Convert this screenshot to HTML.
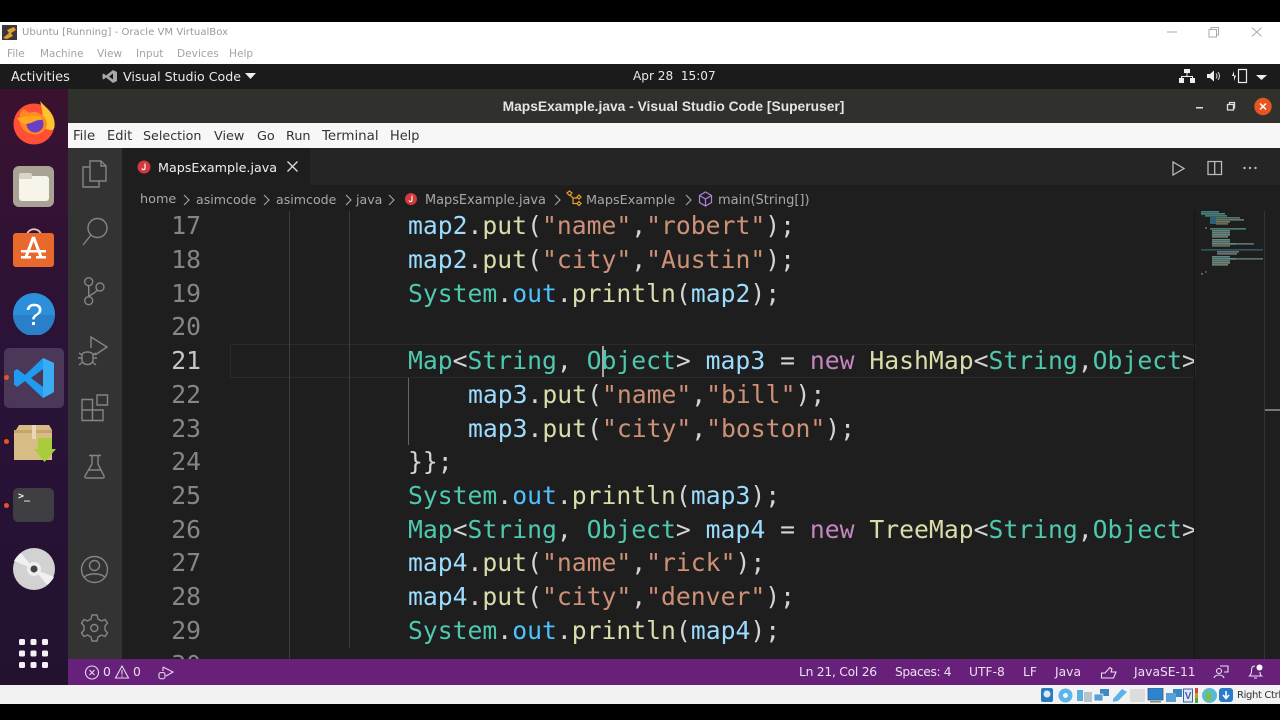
<!DOCTYPE html>
<html><head><meta charset="utf-8">
<style>
html,body{margin:0;padding:0;background:#000;}
body{width:1280px;height:720px;overflow:hidden;position:relative;font-family:"Liberation Sans",sans-serif;}
#root{position:absolute;left:0;top:0;width:1280px;height:720px;overflow:hidden;filter:blur(.3px);}
#root div,#root svg{position:absolute;}
.t{white-space:pre;font-family:"DejaVu Sans","Liberation Sans",sans-serif;}
#root .l{position:absolute;left:0;white-space:pre;font-family:"DejaVu Sans Mono","Liberation Mono",monospace;font-size:24.72px;line-height:34px;height:34px;color:#d4d4d4;}
#root .n{left:130px;width:71px;text-align:right;color:#858585;}
.v{color:#9cdcfe}.f{color:#dcdcaa}.s{color:#ce9178}.c{color:#4ec9b0}.k{color:#c586c0}.o{color:#4fc1ff}
svg .st{fill:none;stroke:#858585;stroke-width:1.4}
#mm rect{height:1.7px}
</style></head><body><div id="root">
<!-- VirtualBox window -->
<div style="left:0;top:22px;width:1280px;height:42px;background:#fff"></div>
<svg style="left:2px;top:25px" width="15" height="15" viewBox="0 0 15 15"><rect width="15" height="15" fill="#3a3a3a"/><path d="M1 13L7 8L5 5L12 2L14 5L9 8L11 11L5 14Z" fill="#e0a030"/></svg>
<div class="t" style="left:22px;top:26px;font-size:10.1px;line-height:14px;color:#9a9a9a">Ubuntu [Running] - Oracle VM VirtualBox</div>
<div class="t" style="left:7px;top:47px;font-size:10.6px;line-height:14px;color:#a3a3a3">File</div>
<div class="t" style="left:40px;top:47px;font-size:10.4px;line-height:14px;color:#a3a3a3">Machine</div>
<div class="t" style="left:97px;top:47px;font-size:10.6px;line-height:14px;color:#a3a3a3">View</div>
<div class="t" style="left:136px;top:47px;font-size:10.6px;line-height:14px;color:#a3a3a3">Input</div>
<div class="t" style="left:177px;top:47px;font-size:10.6px;line-height:14px;color:#a3a3a3">Devices</div>
<div class="t" style="left:229px;top:47px;font-size:10.6px;line-height:14px;color:#a3a3a3">Help</div>
<svg style="left:1160px;top:24px" width="110" height="16" viewBox="0 0 110 16" fill="none" stroke="#aaa" stroke-width="1"><path d="M7 8H17"/><path d="M49 5.500H56.500V13H49ZM51 5.500V3.500H58.500V11H56.500"/><path d="M92 3.500L101.500 12.500M101.500 3.500L92 12.500"/></svg>
<!-- GNOME top bar -->
<div style="left:0;top:64px;width:1280px;height:25px;background:#1b1b1b"></div>
<div class="t" style="left:11px;top:69px;font-size:12.9px;line-height:17px;color:#eaeaea">Activities</div>
<svg style="left:102px;top:69px" width="16" height="15" viewBox="0 0 16 15"><path d="M11 1L15 3V12L11 14L4 8.500L1.500 10.500L0.500 9.500V5.500L1.500 4.500L4 6.500ZM11 4.500L7 7.500L11 10.500Z" fill="#a8a8a8" fill-rule="evenodd"/></svg>
<div class="t" style="left:123px;top:68px;font-size:12.6px;line-height:17px;color:#eaeaea">Visual Studio Code</div>
<svg style="left:245px;top:73px" width="11" height="7"><path d="M0 0H11L5.500 6Z" fill="#eee"/></svg>
<div class="t" style="left:633px;top:68px;font-size:12.1px;line-height:17px;color:#e8e8e8">Apr 28  15:07</div>
<svg style="left:1178px;top:68px" width="92" height="16" viewBox="0 0 92 16"><g fill="#eee"><rect x="6" y="1" width="6" height="4"/><rect x="1" y="10" width="5" height="5"/><rect x="12" y="10" width="5" height="5"/><path d="M8.500 5h1v3H15v2h-1V9H4v1H3V8h5.500Z"/><path d="M29 6h3l4-3.500v11L32 10h-3Z"/></g><path d="M38 5.500Q40 8 38 10.500M40 4Q43 8 40 12" fill="none" stroke="#ddd"/><rect x="60.500" y="1.500" width="8" height="13" fill="none" stroke="#eee" stroke-width="1.200"/><path d="M56 3L54 8H56V13L58 7.500H56Z" fill="#eee"/><path d="M78 7H89L83.500 12Z" fill="#eee"/></svg>
<!-- Dock -->
<div style="left:0;top:89px;width:68px;height:596px;background:linear-gradient(#3a1230,#2a1238 45%,#221230)"></div>
<!-- firefox -->
<svg style="left:12px;top:100px" width="44" height="45" viewBox="0 0 44 45"><circle cx="22" cy="24" r="20.500" fill="#ff5036"/><path d="M28 1C34 8 44 14 42.500 27C41 32 36 30 30 27C32 18 30 8 28 1Z" fill="#ffc52e"/><path d="M9 12C12 7 14 10 17 13C24 10 33 14 35 23C35 31 27 36 20 34C11 32 8 26 8 20C7 17 8 14 9 12Z" fill="#ff8a1f"/><circle cx="23" cy="24" r="8.500" fill="#6a3fc4"/><path d="M5 18C10 18 18 14 27 16C29 17 31 19 30 20C24 19 20 24 13 24C10 24 7 21 5 18Z" fill="#ffa51f"/></svg>
<!-- files -->
<div style="left:13px;top:166px;width:41px;height:41px;border-radius:6px;background:#a8a394"></div>
<div style="left:19px;top:176px;width:30px;height:25px;border-radius:3px;background:#f7f4ea"></div>
<div style="left:19px;top:173px;width:13px;height:6px;border-radius:2px 2px 0 0;background:#d8d4c8"></div>
<!-- software -->
<svg style="left:13px;top:228px" width="42" height="40" viewBox="0 0 42 40"><path d="M14 8C14 -1 28 -1 28 8" fill="none" stroke="#e6c8b8" stroke-width="1.800"/><rect y="5" width="41" height="34" rx="3" fill="#e9692c"/><path d="M20.500 9L13 29M20.500 9L28 29" stroke="#fff" stroke-width="3" fill="none"/><rect x="8" y="22" width="25" height="2.500" fill="#fff"/><rect x="8" y="28" width="10" height="2.500" fill="#fff"/><rect x="23" y="28" width="10" height="2.500" fill="#fff"/></svg>
<!-- help -->
<svg style="left:13px;top:293px" width="42" height="42" viewBox="0 0 42 42"><circle cx="21" cy="21" r="21" fill="#2c8fdc"/><path d="M0 22A21 21 0 0 0 42 22Z" fill="#2a80c8"/><text x="21" y="32" font-family="Liberation Sans,sans-serif" font-size="31" fill="#fff" text-anchor="middle">?</text></svg>
<!-- vscode -->
<div style="left:4px;top:348px;width:60px;height:60px;border-radius:5px;background:#4b3858"></div>
<div style="left:4px;top:375px;width:5px;height:5px;border-radius:50%;background:#e95420"></div>
<svg style="left:13px;top:357px" width="42" height="42" viewBox="0 0 42 42"><path d="M30 1L41 6V35L30 41L12 24L4 30L1 27.500V14L4 12L12 18ZM30 12L18 21L30 30Z" fill="#1f9cf0" fill-rule="evenodd"/><path d="M30 1L41 6V35L30 41Z" fill="#39adf2"/></svg>
<!-- package -->
<div style="left:4px;top:439px;width:5px;height:5px;border-radius:50%;background:#e95420"></div>
<svg style="left:13px;top:424px" width="44" height="42" viewBox="0 0 44 42"><path d="M3 6L6 1H36L39 6V36H1V6Z" fill="#d8bc86"/><path d="M1 6H39V9H1Z" fill="#c4a46c"/><rect x="19" y="1" width="4" height="14" fill="#e8d8b8"/><path d="M25 14H39V25H43L31.500 38L21 25H25Z" fill="#a8cc3c"/></svg>
<!-- terminal -->
<div style="left:4px;top:503px;width:5px;height:5px;border-radius:50%;background:#e95420"></div>
<div style="left:13px;top:488px;width:41px;height:34px;border-radius:5px;background:#3f3f43"></div>
<div class="t" style="left:18px;top:491px;font-size:10px;line-height:12px;color:#eee;font-family:'DejaVu Sans Mono',monospace;font-weight:bold">&gt;_</div>
<!-- disc -->
<svg style="left:13px;top:548px" width="42" height="42" viewBox="0 0 42 42"><circle cx="21" cy="21" r="21" fill="#d2d2d2"/><path d="M21 21L1 13A21 21 0 0 1 8 5ZM21 21L41 29A21 21 0 0 1 34 37Z" fill="#f0f0f0"/><circle cx="21" cy="21" r="7" fill="#eee"/><circle cx="21" cy="21" r="3.500" fill="#444"/></svg>
<!-- apps grid -->
<svg style="left:19px;top:639px" width="30" height="30" fill="#f4f0f4"><rect x="0" y="0" width="6" height="6" rx="1.500"/><rect x="11.500" y="0" width="6" height="6" rx="1.500"/><rect x="23" y="0" width="6" height="6" rx="1.500"/><rect x="0" y="11.500" width="6" height="6" rx="1.500"/><rect x="11.500" y="11.500" width="6" height="6" rx="1.500"/><rect x="23" y="11.500" width="6" height="6" rx="1.500"/><rect x="0" y="23" width="6" height="6" rx="1.500"/><rect x="11.500" y="23" width="6" height="6" rx="1.500"/><rect x="23" y="23" width="6" height="6" rx="1.500"/></svg>
<!-- VS Code title -->
<div style="left:68px;top:89px;width:1212px;height:34px;background:#30302d"></div>
<div class="t" style="left:68px;top:98px;width:1211px;text-align:center;font-size:13.8px;line-height:17px;font-weight:bold;color:#e4e4e4;font-family:'Liberation Sans',sans-serif;">MapsExample.java - Visual Studio Code [Superuser]</div>
<svg style="left:1190px;top:97px" width="84" height="20" viewBox="0 0 84 20"><rect x="6" y="10" width="7" height="1.500" fill="#ddd"/><path d="M37.500 7.500H43.500V13H37.500ZM39.500 7.500V5.500H44.500V11H43.500" fill="none" stroke="#ddd" stroke-width="1.300"/><circle cx="73" cy="9.500" r="8.700" fill="#e95420"/><path d="M70 6.500L76 12.500M76 6.500L70 12.500" stroke="#fff" stroke-width="1.500"/></svg>
<!-- menu bar -->
<div style="left:68px;top:123px;width:1212px;height:25px;background:#f7f7f7"></div>
<div class="t" style="left:73px;top:128px;font-size:13.2px;line-height:17px;color:#333">File</div>
<div class="t" style="left:107px;top:128px;font-size:13px;line-height:17px;color:#333">Edit</div>
<div class="t" style="left:143px;top:127px;font-size:12.7px;line-height:17px;color:#333">Selection</div>
<div class="t" style="left:214px;top:128px;font-size:12.8px;line-height:17px;color:#333">View</div>
<div class="t" style="left:257px;top:128px;font-size:12.8px;line-height:17px;color:#333">Go</div>
<div class="t" style="left:286px;top:128px;font-size:12.8px;line-height:17px;color:#333">Run</div>
<div class="t" style="left:322px;top:128px;font-size:13.4px;line-height:17px;color:#333">Terminal</div>
<div class="t" style="left:390px;top:128px;font-size:12.9px;line-height:17px;color:#333">Help</div>
<!-- activity bar -->
<div style="left:68px;top:148px;width:54px;height:511px;background:#333"></div>
<svg style="left:68px;top:148px" width="54" height="511" viewBox="0 0 54 511">
<path class="st" d="M22 13H33L38 18V33H22ZM33 13V18H38M22 19H15V39H31V33"/>
<circle class="st" cx="29.500" cy="80" r="9.500"/><path class="st" d="M23 87L15 97"/>
<circle class="st" cx="20.700" cy="133.700" r="4"/><circle class="st" cx="20.700" cy="152.700" r="4"/><circle class="st" cx="32" cy="139" r="4"/><path class="st" d="M20.700 137.700V148.700M29 142C27 146 22 146 21 149"/>
<path class="st" d="M23 200V189L39 199L27 207M14 207C14 203 25 203 25 207V212C25 218 14 218 14 212ZM11 205L14 207M10 210H14M11 217L14 214.500M28 205L25 207M29 210H25M28 217L25 214.500"/>
<path class="st" d="M14 251.500H24.500V262H14ZM14 262H24.500V272.500H14ZM24.500 262H35V272.500H24.500ZM29 247H39.500V257H29Z"/>
<path class="st" d="M21 307.500H33M24 307.500V316L17 328C16.500 329.500 17 330 18.500 330H34.500C36 330 36.500 329.500 36 328L30 316V307.500M20.500 322H33"/>
<circle class="st" cx="26.500" cy="421.500" r="13"/><circle class="st" cx="26.500" cy="417.500" r="5"/><path class="st" d="M16 430C18 424.500 35 424.500 37 430"/>
<circle class="st" cx="26.300" cy="480" r="3.500"/><path class="st" d="M24 467L23 471L19.500 473L16 471.500L13.500 475L16 478L16 482L13.500 485L16 488.500L19.500 487L23 489L24 493H29L30 489L33.500 487L37 488.500L39.500 485L37 482V478L39.500 475L37 471.500L33.500 473L30 471L29 467Z"/>
</svg>
<!-- tab area -->
<div style="left:122px;top:148px;width:1158px;height:63px;background:#252526"></div>
<div style="left:122px;top:148px;width:188px;height:37px;background:#1e1e1e"></div>
<div style="left:310px;top:148px;width:970px;height:37px;background:#252526"></div>
<div style="left:122px;top:185px;width:1158px;height:26px;background:#1e1e1e"></div>
<svg style="left:137px;top:160px" width="14" height="14"><circle cx="7" cy="7" r="6.500" fill="#d33a3e"/><path d="M8 3.500V8C8 10 5.500 10 5 8.500" fill="none" stroke="#fff" stroke-width="1.200"/></svg>
<div class="t" style="left:158px;top:159px;font-size:12.7px;line-height:17px;color:#f0f0f0">MapsExample.java</div>
<svg style="left:286px;top:160px" width="13" height="13"><path d="M1.500 1.500L11.500 11.500M11.500 1.500L1.500 11.500" stroke="#ddd" stroke-width="1.300"/></svg>
<svg style="left:1168px;top:158px" width="95" height="20" viewBox="0 0 95 20" fill="none" stroke="#bbb" stroke-width="1.300"><path d="M5 4V17L16 10.500Z"/><path d="M40 3.500H53.500V16.500H40ZM46.700 3.500V16.500"/><g fill="#bbb" stroke="none"><circle cx="76.500" cy="10" r="1.200"/><circle cx="82" cy="10" r="1.200"/><circle cx="87.500" cy="10" r="1.200"/></g></svg>
<!-- breadcrumbs -->
<div class="t" style="left:140px;top:191px;font-size:12.8px;line-height:17px;color:#a8a8a8">home</div>
<div class="t" style="left:196px;top:191px;font-size:12.6px;line-height:17px;color:#a8a8a8">asimcode</div>
<div class="t" style="left:276px;top:191px;font-size:12.6px;line-height:17px;color:#a8a8a8">asimcode</div>
<div class="t" style="left:356px;top:191px;font-size:12.6px;line-height:17px;color:#a8a8a8">java</div>
<svg style="left:182px;top:192px" width="10" height="16"><path d="M2 3L7 8L2 13" fill="none" stroke="#a8a8a8" stroke-width="1.100"/></svg>
<svg style="left:262px;top:192px" width="10" height="16"><path d="M2 3L7 8L2 13" fill="none" stroke="#a8a8a8" stroke-width="1.100"/></svg>
<svg style="left:344px;top:192px" width="10" height="16"><path d="M2 3L7 8L2 13" fill="none" stroke="#a8a8a8" stroke-width="1.100"/></svg>
<svg style="left:387px;top:192px" width="10" height="16"><path d="M2 3L7 8L2 13" fill="none" stroke="#a8a8a8" stroke-width="1.100"/></svg>
<svg style="left:553px;top:192px" width="10" height="16"><path d="M2 3L7 8L2 13" fill="none" stroke="#a8a8a8" stroke-width="1.100"/></svg>
<svg style="left:684px;top:192px" width="10" height="16"><path d="M2 3L7 8L2 13" fill="none" stroke="#a8a8a8" stroke-width="1.100"/></svg>
<svg style="left:404px;top:192px" width="14" height="14"><circle cx="7" cy="7" r="6" fill="#d33a3e"/><path d="M8 3.500V8C8 10 5.500 10 5 8.500" fill="none" stroke="#fff" stroke-width="1.100"/></svg>
<div class="t" style="left:425px;top:192px;font-size:12.9px;line-height:17px;color:#a8a8a8">MapsExample.java</div>
<svg style="left:565px;top:190px" width="18" height="17" viewBox="0 0 18 17" fill="none" stroke="#ee9d28" stroke-width="1.200"><path d="M2 3L4.500 1L7 3L4.500 5.500ZM12 7L14 5L16 7L14 9ZM12 13.500L14 11.500L16 13.500L14 15.500ZM5 5L8 8H12M8 8V13.500H12"/></svg>
<div class="t" style="left:586px;top:192px;font-size:12.8px;line-height:17px;color:#a8a8a8">MapsExample</div>
<svg style="left:698px;top:191px" width="15" height="16" viewBox="0 0 15 16" fill="none" stroke="#b180d7" stroke-width="1.200"><path d="M7.500 1L13.500 4.500V11.500L7.500 15L1.500 11.500V4.500ZM1.500 4.500L7.500 8L13.500 4.500M7.500 8V15"/></svg>
<div class="t" style="left:718px;top:192px;font-size:13px;line-height:17px;color:#a8a8a8">main(String[])</div>
<!-- editor -->
<div style="left:122px;top:211px;width:1158px;height:448px;background:#1e1e1e;overflow:hidden">
<div style="left:108px;top:133px;width:964px;height:32px;border:1px solid #2a2a2a"></div>
<div style="left:167px;top:0;width:1px;height:448px;background:#3c3c3c"></div>
<div style="left:227px;top:0;width:1px;height:437px;background:#3c3c3c"></div>
<div style="left:286px;top:167px;width:1px;height:67px;background:#666"></div>
<div style="left:480px;top:135px;width:2px;height:31px;background:#a6a6a6"></div>
</div>
<div style="left:0;top:211px;width:1195px;height:448px;overflow:hidden">
<div class="l n" style="top:-2px">17</div>
<div class="l n" style="top:32px">18</div>
<div class="l n" style="top:66px">19</div>
<div class="l n" style="top:99px">20</div>
<div class="l n" style="top:133px;color:#c6c6c6">21</div>
<div class="l n" style="top:167px">22</div>
<div class="l n" style="top:201px">23</div>
<div class="l n" style="top:234px">24</div>
<div class="l n" style="top:268px">25</div>
<div class="l n" style="top:302px">26</div>
<div class="l n" style="top:335px">27</div>
<div class="l n" style="top:369px">28</div>
<div class="l n" style="top:403px">29</div>
<div class="l n" style="top:437px">30</div>
<div class="l" style="top:-2px;left:408px"><span class="v">map2</span>.<span class="f">put</span>(<span class="s">"name"</span>,<span class="s">"robert"</span>);</div>
<div class="l" style="top:32px;left:408px"><span class="v">map2</span>.<span class="f">put</span>(<span class="s">"city"</span>,<span class="s">"Austin"</span>);</div>
<div class="l" style="top:66px;left:408px"><span class="c">System</span>.<span class="o">out</span>.<span class="f">println</span>(<span class="v">map2</span>);</div>
<div class="l" style="top:133px;left:408px"><span class="c">Map</span>&lt;<span class="c">String</span>, <span class="c">Object</span>&gt; <span class="v">map3</span> = <span class="k">new</span> <span class="f">HashMap</span>&lt;<span class="c">String</span>,<span class="c">Object</span>&gt;</div>
<div class="l" style="top:167px;left:468px"><span class="v">map3</span>.<span class="f">put</span>(<span class="s">"name"</span>,<span class="s">"bill"</span>);</div>
<div class="l" style="top:201px;left:468px"><span class="v">map3</span>.<span class="f">put</span>(<span class="s">"city"</span>,<span class="s">"boston"</span>);</div>
<div class="l" style="top:234px;left:408px">}};</div>
<div class="l" style="top:268px;left:408px"><span class="c">System</span>.<span class="o">out</span>.<span class="f">println</span>(<span class="v">map3</span>);</div>
<div class="l" style="top:302px;left:408px"><span class="c">Map</span>&lt;<span class="c">String</span>, <span class="c">Object</span>&gt; <span class="v">map4</span> = <span class="k">new</span> <span class="f">TreeMap</span>&lt;<span class="c">String</span>,<span class="c">Object</span>&gt;</div>
<div class="l" style="top:335px;left:408px"><span class="v">map4</span>.<span class="f">put</span>(<span class="s">"name"</span>,<span class="s">"rick"</span>);</div>
<div class="l" style="top:369px;left:408px"><span class="v">map4</span>.<span class="f">put</span>(<span class="s">"city"</span>,<span class="s">"denver"</span>);</div>
<div class="l" style="top:403px;left:408px"><span class="c">System</span>.<span class="o">out</span>.<span class="f">println</span>(<span class="v">map4</span>);</div>
</div>
<!-- minimap -->
<div style="left:1194px;top:211px;width:1px;height:448px;background:#141414"></div>
<div style="left:1264px;top:211px;width:1px;height:448px;background:#333"></div>
<div style="left:1265px;top:409px;width:15px;height:2px;background:#777"></div>
<svg id="mm" style="left:1190px;top:205px" width="76" height="75" viewBox="0 0 76 75">
<g>
<rect x="11" y="6" width="18" height="1" fill="#3f7f85"/><rect x="11" y="8" width="24" height="1" fill="#4a8478"/><rect x="15" y="10" width="22" height="1" fill="#3f7f7a"/>
<rect x="20" y="12" width="6" style="height:7px" fill="#2f5f78"/><rect x="26" y="12" width="24" height="1" fill="#5f7068"/><rect x="26" y="14" width="28" height="1" fill="#5c7a6e"/><rect x="26" y="16" width="14" height="1" fill="#7a7a5a"/><rect x="26" y="18" width="12" height="1" fill="#6a6a58"/>
<rect x="15" y="22" width="2" height="2" fill="#5a6a6a"/>
<rect x="20" y="23" width="36" height="1" fill="#4a7a72"/>
<rect x="22" y="25" width="18" height="1" fill="#5c8888"/><rect x="22" y="27" width="18" height="1" fill="#708070"/><rect x="22" y="29" width="18" height="1" fill="#6a8a8a"/><rect x="22" y="31" width="16" height="1" fill="#707a64"/>
<rect x="22" y="34" width="18" height="1" fill="#5c8888"/><rect x="22" y="36" width="18" height="1" fill="#70806c"/><rect x="22" y="38" width="24" height="1" fill="#5c8a84"/><rect x="46" y="38" width="18" height="1" fill="#5a7068"/><rect x="22" y="40" width="18" height="1" fill="#706a5a"/>
<rect x="11" y="44" width="62" height="1" fill="#2f555c"/>
<rect x="27" y="46" width="22" height="1" fill="#5a7a80"/><rect x="27" y="48" width="20" height="1" fill="#6a7068"/>
<rect x="22" y="51" width="18" height="1" fill="#5c8888"/><rect x="22" y="53" width="24" height="1" fill="#5a8a84"/><rect x="46" y="53" width="27" height="1" fill="#557068"/><rect x="22" y="55" width="18" height="1" fill="#708070"/><rect x="22" y="57" width="18" height="1" fill="#6a8a8a"/><rect x="22" y="59" width="16" height="1" fill="#707a64"/>
<rect x="11" y="68" width="2" height="1.500" fill="#666"/><rect x="15" y="66" width="1.500" height="2" fill="#666"/>
</g></svg>
<!-- status bar -->
<div style="left:68px;top:659px;width:1212px;height:26px;background:#68217a"></div>
<svg style="left:84px;top:664px" width="92" height="17" viewBox="0 0 92 17" fill="none" stroke="#e6d8ea" stroke-width="1.100"><circle cx="8" cy="8.500" r="6.500"/><path d="M5.500 6L10.500 11M10.500 6L5.500 11"/><path d="M38 2L44.500 14H31.500ZM38 6V10.500M38 11.500V12.800"/><path d="M79 3V7M79 3L89 8L82 12M75 10C75 8 81 8 81 10V13C81 15.500 75 15.500 75 13Z"/></svg>
<div class="t" style="left:103px;top:664px;font-size:12.3px;line-height:17px;color:#ecdff0">0</div>
<div class="t" style="left:133px;top:664px;font-size:12.3px;line-height:17px;color:#ecdff0">0</div>
<div class="t" style="left:799px;top:664px;font-size:12.3px;line-height:17px;color:#ecdff0;letter-spacing:-.25px">Ln 21, Col 26</div>
<div class="t" style="left:895px;top:664px;font-size:12.3px;line-height:17px;color:#ecdff0;letter-spacing:-.4px">Spaces: 4</div>
<div class="t" style="left:969px;top:664px;font-size:12.3px;line-height:17px;color:#ecdff0">UTF-8</div>
<div class="t" style="left:1023px;top:664px;font-size:12.3px;line-height:17px;color:#ecdff0">LF</div>
<div class="t" style="left:1055px;top:664px;font-size:12.3px;line-height:17px;color:#ecdff0">Java</div>
<div class="t" style="left:1134px;top:664px;font-size:12.3px;line-height:17px;color:#ecdff0">JavaSE-11</div>
<svg style="left:1100px;top:664px" width="18" height="17" viewBox="0 0 18 17" fill="none" stroke="#ecdff0" stroke-width="1.100"><path d="M1.500 9H5L10 3.500L12 5L11 8H16L13.500 14H1.500Z"/></svg>
<svg style="left:1213px;top:664px" width="17" height="17" viewBox="0 0 17 17" fill="none" stroke="#ecdff0" stroke-width="1.100"><circle cx="6" cy="7" r="2.500"/><path d="M1 14C2 10 10 10 11 14M7 2H15V8H11"/></svg>
<svg style="left:1247px;top:663px" width="18" height="18" viewBox="0 0 18 18" fill="none" stroke="#ecdff0" stroke-width="1.100"><path d="M8 3C5 3 4.500 5 4.500 8C4.500 11 3.500 12 2.500 13H14.500C13 12 13 10 13 9M7 15H10"/><circle cx="12.500" cy="4.500" r="3" fill="#fff" stroke="none"/></svg>
<!-- VirtualBox status bar -->
<div style="left:0;top:685px;width:1280px;height:19px;background:#f2f2f2"></div>
<svg style="left:1040px;top:688px" width="196" height="16" viewBox="0 0 196 16">
<rect x="1" y="0" width="12" height="14" rx="2" fill="#2a7cc0"/><circle cx="7" cy="6" r="3.500" fill="#d8eaf8"/>
<circle cx="25.500" cy="7.500" r="7" fill="#5cb4e8"/><circle cx="25.500" cy="7.500" r="2.500" fill="#eaf6ff"/>
<path d="M37 2H43V13H37Z" fill="#5ab0e0"/><rect x="44" y="4" width="8" height="10" fill="#b8c4cc"/>
<rect x="60" y="1" width="9" height="7" fill="#3a88c4"/><rect x="54" y="6" width="9" height="7" fill="#5aa0d4" stroke="#fff" stroke-width=".7"/>
<path d="M73 11L82 1L87 4L78 13L73 14Z" fill="#5ab4e8"/>
<rect x="90" y="1" width="15" height="13" rx="1" fill="#dcdcdc"/>
<rect x="108" y="0" width="15" height="12" fill="#2a84d0" stroke="#4a5a6a" stroke-width=".8"/><rect x="110" y="13" width="11" height="1.500" fill="#888"/>
<rect x="133" y="1" width="9" height="8" fill="#3a88c4"/><rect x="126" y="5" width="10" height="9" fill="#5aa0d4"/>
<rect x="143.500" y="1" width="9" height="13" fill="#dce6f4" stroke="#3a62a8"/><text x="144.700" y="11" font-family="Liberation Sans,sans-serif" font-size="10" font-weight="bold" fill="#3a62a8">V</text>
<rect x="155" y="0" width="3" height="15" fill="#c89a20"/><rect x="155" y="0" width="3" height="5" fill="#c44"/><rect x="155" y="10" width="3" height="5" fill="#4a4"/>
<circle cx="169.500" cy="7.500" r="7.500" fill="#5ab8d8"/><path d="M165 2L173 8L167 15Z" fill="#7cc04a"/>
<rect x="179" y="0" width="14" height="14" rx="3" fill="#2a7cc8"/><path d="M186 3V9M183 7L186 10.500L189 7" stroke="#fff" stroke-width="1.600" fill="none"/></svg>
<div class="t" style="left:1237px;top:689px;font-size:10px;line-height:13px;color:#333;font-family:'DejaVu Sans',sans-serif;letter-spacing:-.35px">Right Ctrl</div>
</div></body></html>
